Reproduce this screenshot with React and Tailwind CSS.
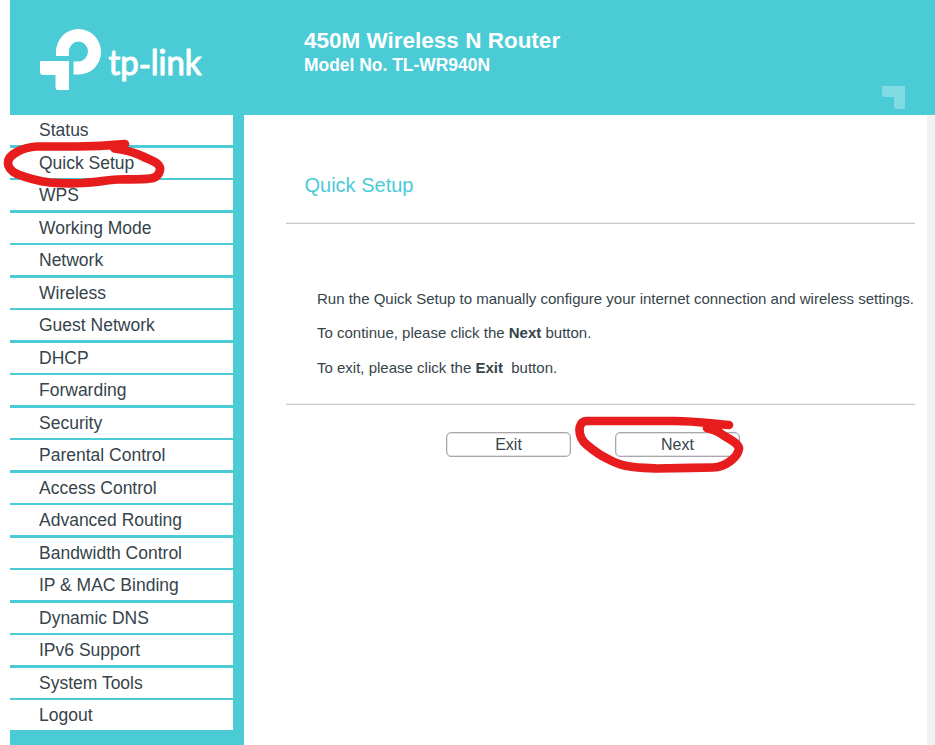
const menu = [
  'Status', 'Quick Setup', 'WPS', 'Working Mode', 'Network', 'Wireless',
  'Guest Network', 'DHCP', 'Forwarding', 'Security', 'Parental Control',
  'Access Control', 'Advanced Routing', 'Bandwidth Control',
  'IP & MAC Binding', 'Dynamic DNS', 'IPv6 Support', 'System Tools', 'Logout',
];

function Logo() {
  return (
    <svg className="mt-[28px] ml-[30px] h-[64px] w-[168px] shrink-0" viewBox="40 28 168 64" fill="#fff" role="img">
      <path d="M56 56V52A22.500 23 0 0 1 101 52A22.500 22 0 0 1 78.500 74.500H73.500V61.500H78.500A9.500 10 0 1 0 69 51.500V56Z" />
      <path d="M40 61H69V90H58Q55.500 90 55.500 87V75H43Q40 75 40 72Z" />
      <text x="108.500" y="75" fontSize="34" textLength="93" lengthAdjust="spacingAndGlyphs" className="font-['Lato',sans-serif]" stroke="#fff" strokeWidth="1.1">
        tp<tspan dy="2">-</tspan><tspan dy="-2">link</tspan>
      </text>
    </svg>
  );
}

// Hand-drawn marker circle laid over a control
function Marker({ className, viewBox, d }) {
  return (
    <svg className={`pointer-events-none absolute ${className}`} viewBox={viewBox} fill="none" stroke="#e71d1d" strokeWidth="8.700" strokeLinecap="round" strokeLinejoin="round">
      <path d={d} />
    </svg>
  );
}

function Button({ children }) {
  return (
    <button className="h-[25px] w-[125px] rounded-[5px] border border-[#a9a7ac] bg-white text-[16px] leading-[23px] shadow-[inset_0_0_0_0.5px_#c8c8cc]">
      {children}
    </button>
  );
}

export default function App() {
  return (
    <div className="relative h-[745px] w-[935px] overflow-hidden bg-white pl-[10px] font-['Liberation_Sans',Arial,sans-serif] text-[#36444b]">
      <header className="flex h-[115px] bg-[#4acbd6] text-white">
        <Logo />
        <div className="ml-[96px] pt-[27px] font-bold">
          <h1 className="text-[22.500px] leading-[27px] whitespace-nowrap">450M Wireless N Router</h1>
          <p className="text-[17.450px] leading-[23px] whitespace-nowrap">Model No. TL-WR940N</p>
        </div>
        <svg className="mt-[86px] mr-[30px] ml-auto h-[23px] w-[23px]" viewBox="0 0 23 23" fill="#80dbe2">
          <path d="M0 0H23V23H14Q12 23 12 20V11H3Q0 11 0 8Z" />
        </svg>
      </header>
      <div className="flex h-[630px]">
        <nav className="w-[234px] shrink-0 bg-[#4acbd6] pr-[11px]">
          {menu.map((item) => (
            <a key={item} className="block h-[32px] border-b-2 border-[#4acbd6] bg-white pl-[29px] text-[17.500px] leading-[30px] odd:h-[33px] odd:border-b-[3px] last:h-[30px] last:border-b-0">
              {item}
            </a>
          ))}
        </nav>
        <main className="flex-1 pr-[12px] pl-[42px]">
          <h2 className="mt-[57px] ml-[18.500px] text-[20px] leading-[26px] text-[#4acbd6]">Quick Setup</h2>
          <hr className="mt-[24px] h-[2px] border-t border-b border-[#ededed] border-b-[#cacaca]" />
          <div className="pt-[66px] pl-[31px] text-[15px] leading-[18px] whitespace-nowrap">
            <p>Run the Quick Setup to manually configure your internet connection and wireless settings.</p>
            <p className="mt-[16px]">To continue, please click the <b>Next</b> button.</p>
            <p className="mt-[17px]">To exit, please click the <b>Exit</b>&nbsp; button.</p>
          </div>
          <hr className="mt-[26px] h-[2px] border-t border-b border-[#ededed] border-b-[#cacaca]" />
          <div className="mt-[27px] flex gap-[44px] pl-[160px]">
            <Button>Exit</Button>
            <Button>Next</Button>
          </div>
        </main>
        <div className="w-[8px] bg-[#f1f1f1]" />
      </div>
      <Marker
        className="top-[135px] left-0 h-[60px] w-[170px]"
        viewBox="0 135 170 60"
        d="M125 144C110 145.500 95 146.500 77 146.500H37C28 147 22 149 17 152C11 155 8 159 8 163C8 168 11 171 17 174C27 178 38 181 50 182.500C61 183.500 72 183.500 83 183C95 182 106 180.500 117 179.500C128 179 140 180 150 178.500C157 178 159.500 173 160 170C161 163 152 161 143 156.500C134 152 125 150 114.500 148.500"
      />
      <Marker
        className="top-[410px] left-[570px] h-[70px] w-[180px]"
        viewBox="570 410 180 70"
        d="M729 425C711 423.500 695 421 675 421H587C581 421 579.500 426 579.500 430C579.500 435 582 441 587 445C593 450 599 455 607 458.500C615 463 622 465.500 630 466.500C638 468 648 468 657 468.500C677 468 694 468 713 467.500C726 467 738 457 739 448.500C738 442 726 438 720 433C716 430.500 711 429 707 428"
      />
    </div>
  );
}
